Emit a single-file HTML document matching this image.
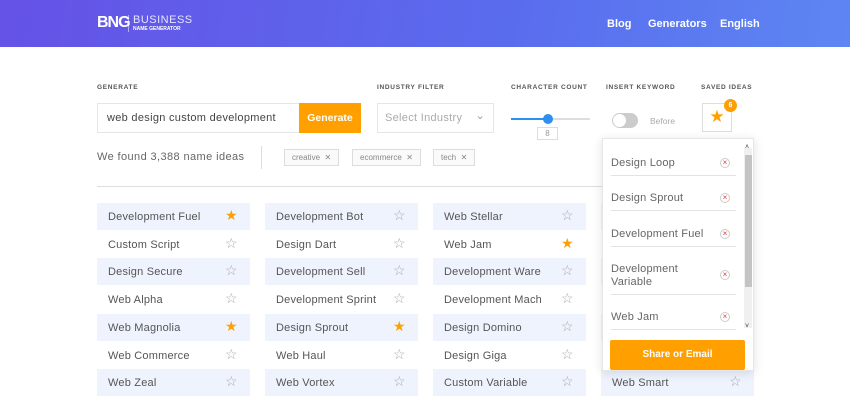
<!DOCTYPE html><html><head><style>
*{box-sizing:border-box;margin:0;padding:0}
body{width:850px;height:400px;overflow:hidden;background:#fff;font-family:"Liberation Sans",sans-serif;position:relative;color:#555}
.hdr{position:absolute;left:0;top:0;width:850px;height:47px;background:linear-gradient(100deg,#6552e6,#5a6cee 60%,#5d86f2)}
.a{position:absolute}
.lbl{position:absolute;font-size:6.5px;font-weight:bold;letter-spacing:.7px;color:#555;top:84px}
.row{position:absolute;height:27px;width:153px;font-size:11px;color:#555;padding:8px 0 0 11px;letter-spacing:.2px}
.row.s{background:#eef3fd}
.st{position:absolute;right:11px;top:5px;width:14px;height:14px}
.it{position:absolute;left:611px;width:125px;border-bottom:1px solid #e3e3e3;font-size:11px;color:#666;letter-spacing:.2px}
.x{position:absolute;left:720px;width:10px;height:10px;border:1px solid #ccc;border-radius:50%;color:#e33;font-size:8px;line-height:8px;text-align:center}
.tag{position:absolute;top:149px;height:17px;border:1px solid #ddd;background:#fafafa;font-size:8px;color:#888;padding:3px 7px}
</style></head><body>
<div class="hdr"></div>
<div class="a" style="left:97px;top:14px;color:#fff;font-size:16px;font-weight:bold;letter-spacing:-1px">BNG</div>
<div class="a" style="left:128px;top:15px;width:1px;height:17px;background:rgba(255,255,255,.5)"></div>
<div class="a" style="left:133px;top:14px;color:#e6e6ff;font-size:11px;letter-spacing:.5px">BUSINESS</div>
<div class="a" style="left:133px;top:26px;color:#fff;font-size:5px;font-weight:bold">NAME GENERATOR</div>
<div class="a" style="left:607px;top:18px;color:#fff;font-size:11px;font-weight:bold">Blog</div>
<div class="a" style="left:648px;top:18px;color:#fff;font-size:11px;font-weight:bold">Generators</div>
<div class="a" style="left:720px;top:18px;color:#fff;font-size:11px;font-weight:bold">English</div>

<div class="lbl" style="left:97px">GENERATE</div>
<div class="lbl" style="left:377px">INDUSTRY FILTER</div>
<div class="lbl" style="left:511px">CHARACTER COUNT</div>
<div class="lbl" style="left:606px">INSERT KEYWORD</div>
<div class="lbl" style="left:701px">SAVED IDEAS</div>
<div class="a" style="left:97px;top:103px;width:203px;height:30px;border:1px solid #e6e6e6;font-size:11px;color:#444;padding:8px 9px;letter-spacing:.3px">web design custom development</div>
<div class="a" style="left:299px;top:103px;width:62px;height:30px;background:#ff9f00;color:#fff;font-size:10.5px;font-weight:bold;padding:9px 0;text-align:center">Generate</div>
<div class="a" style="left:377px;top:103px;width:117px;height:30px;border:1px solid #e6e6e6;font-size:11px;color:#aaa;padding:8px 7px;letter-spacing:.3px">Select Industry<span style="position:absolute;right:8px;top:5px;color:#999">&#8964;</span></div>
<div class="a" style="left:511px;top:118px;width:79px;height:2px;background:#ddd"></div>
<div class="a" style="left:511px;top:118px;width:37px;height:2px;background:#2d8ff0"></div>
<div class="a" style="left:543px;top:114px;width:10px;height:10px;border-radius:50%;background:#2d8ff0"></div>
<div class="a" style="left:537px;top:127px;width:21px;height:13px;border:1px solid #ddd;font-size:8px;color:#999;text-align:center;line-height:11px">8</div>
<div class="a" style="left:612px;top:113px;width:26px;height:15px;border-radius:8px;background:#ccc"></div>
<div class="a" style="left:613px;top:114px;width:13px;height:13px;border-radius:50%;background:#fff"></div>
<div class="a" style="left:650px;top:116px;font-size:8.5px;color:#aaa">Before</div>
<div class="a" style="left:702px;top:103px;width:30px;height:29px;border:1px solid #ddd;background:#fff;color:#ff9f00;font-size:17px;text-align:center;line-height:26px">★</div>
<div class="a" style="left:724px;top:99px;width:13px;height:13px;border-radius:50%;background:#ff9f00;color:#fff;font-size:7px;font-weight:bold;text-align:center;line-height:13px">6</div>

<div class="a" style="left:97px;top:151px;font-size:11px;color:#666;letter-spacing:.4px">We found 3,388 name ideas</div>
<div class="a" style="left:261px;top:146px;width:1px;height:23px;background:#ddd"></div>
<div class="tag" style="left:284px">creative &nbsp;✕</div>
<div class="tag" style="left:352px">ecommerce &nbsp;✕</div>
<div class="tag" style="left:433px">tech &nbsp;✕</div>
<div class="a" style="left:97px;top:186px;width:657px;height:1px;background:#ddd"></div>

<div id="rows"></div>
<script>
var d=[["Development Fuel",1,"Development Bot",0,"Web Stellar",0],["Custom Script",0,"Design Dart",0,"Web Jam",1],["Design Secure",0,"Development Sell",0,"Development Ware",0],["Web Alpha",0,"Development Sprint",0,"Development Mach",0],["Web Magnolia",1,"Design Sprout",1,"Design Domino",0],["Web Commerce",0,"Web Haul",0,"Design Giga",0],["Web Zeal",0,"Web Vortex",0,"Custom Variable",0]];
var h="",xs=[97,265,433,601];
function star(f){return f?'<span class="st" style="color:#ff9f00;font-size:14px;line-height:14px">★</span>':'<span class="st" style="color:#aaa;font-size:14px;line-height:14px">☆</span>'}
d.forEach(function(r,i){var y=203+i*27.7;for(var c=0;c<4;c++){var t=c<3?r[c*2]:(i==6?"Web Smart":"");h+='<div class="row'+(i%2==0?' s':'')+'" style="left:'+xs[c]+'px;top:'+y+'px">'+t+(c<3?star(r[c*2+1]):star(0))+'</div>'}});
document.getElementById("rows").innerHTML=h;
</script>

<div class="a" style="left:602px;top:138px;width:152px;height:233px;background:#fff;border:1px solid #e6e6e6;box-shadow:0 2px 10px rgba(0,0,0,.12)"></div>
<div class="a" style="left:744px;top:148px;width:8px;height:180px;background:#f0f0f0"></div>
<div class="a" style="left:745px;top:155px;width:7px;height:132px;background:#c4c4c4"></div>
<div class="a" style="left:745px;top:144px;font-size:7px;color:#333">˄</div>
<div class="a" style="left:745px;top:323px;font-size:7px;color:#333">˅</div>
<div class="it" style="top:157px;height:19px">Design Loop</div><div class="x" style="top:158px">×</div>
<div class="it" style="top:192px;height:19px">Design Sprout</div><div class="x" style="top:193px">×</div>
<div class="it" style="top:228px;height:19px">Development Fuel</div><div class="x" style="top:229px">×</div>
<div class="it" style="top:263px;height:32px;line-height:13px">Development<br>Variable</div><div class="x" style="top:270px">×</div>
<div class="it" style="top:311px;height:19px">Web Jam</div><div class="x" style="top:312px">×</div>
<div class="a" style="left:610px;top:340px;width:135px;height:30px;background:#ff9f00;border-radius:2px;color:#fff;font-size:10px;font-weight:bold;text-align:center;line-height:30px">Share or Email</div>
</body></html>
